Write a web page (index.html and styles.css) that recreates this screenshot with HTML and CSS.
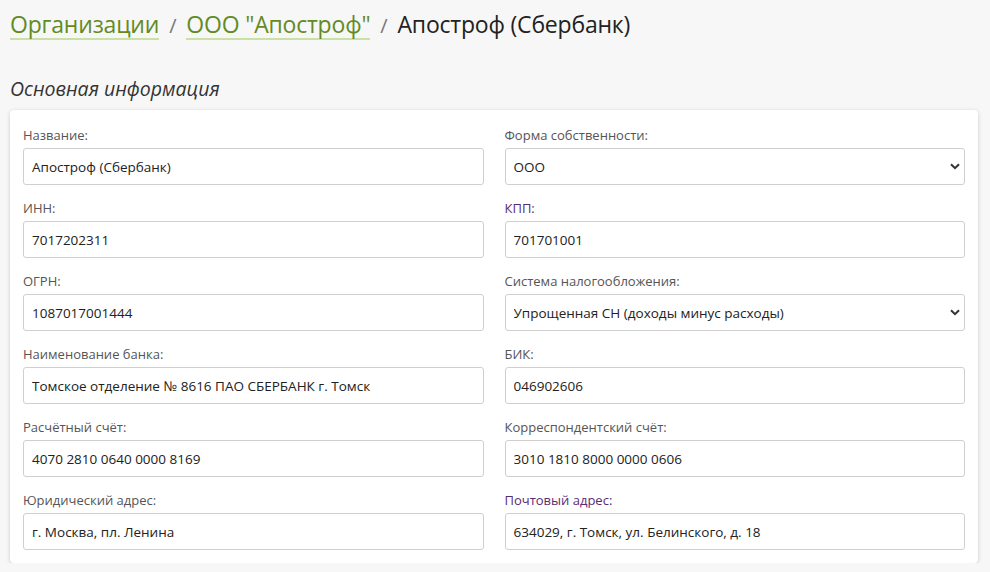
FILE: index.html
```html
<!DOCTYPE html>
<html lang="ru">
<head>
<meta charset="utf-8">
<link rel="stylesheet" href="styles.css">
</head>
<body>
<nav class="crumbs">
  <a class="crumb-link" href="#">Организации</a>
  <span class="sep">/</span>
  <a class="crumb-link" href="#">ООО "Апостроф"</a>
  <span class="sep">/</span>
  <span class="crumb-current">Апостроф (Сбербанк)</span>
</nav>
<h2 class="section-title">Основная информация</h2>
<div class="card">
  <div class="grid">
    <div class="field">
      <label class="label">Название:</label>
      <input class="control" value="Апостроф (Сбербанк)">
    </div>
    <div class="field">
      <label class="label">Форма собственности:</label>
      <div class="select-wrap">
        <select class="control select"><option>ООО</option></select>
        <svg class="chev" width="10" height="7" viewBox="0 0 10 7"><path d="M1 1.2 L5 5.2 L9 1.2" fill="none" stroke="#333" stroke-width="2"/></svg>
      </div>
    </div>
    <div class="field">
      <label class="label">ИНН:</label>
      <input class="control" value="7017202311">
    </div>
    <div class="field">
      <label class="label purple">КПП:</label>
      <input class="control" value="701701001">
    </div>
    <div class="field">
      <label class="label">ОГРН:</label>
      <input class="control" value="1087017001444">
    </div>
    <div class="field">
      <label class="label">Система налогообложения:</label>
      <div class="select-wrap">
        <select class="control select"><option>Упрощенная СН (доходы минус расходы)</option></select>
        <svg class="chev" width="10" height="7" viewBox="0 0 10 7"><path d="M1 1.2 L5 5.2 L9 1.2" fill="none" stroke="#333" stroke-width="2"/></svg>
      </div>
    </div>
    <div class="field">
      <label class="label">Наименование банка:</label>
      <input class="control" value="Томское отделение № 8616 ПАО СБЕРБАНК г. Томск">
    </div>
    <div class="field">
      <label class="label">БИК:</label>
      <input class="control" value="046902606">
    </div>
    <div class="field">
      <label class="label">Расчётный счёт:</label>
      <input class="control" value="4070 2810 0640 0000 8169">
    </div>
    <div class="field">
      <label class="label">Корреспондентский счёт:</label>
      <input class="control" value="3010 1810 8000 0000 0606">
    </div>
    <div class="field">
      <label class="label">Юридический адрес:</label>
      <input class="control" value="г. Москва, пл. Ленина">
    </div>
    <div class="field">
      <label class="label purple">Почтовый адрес:</label>
      <input class="control" value="634029, г. Томск, ул. Белинского, д. 18">
    </div>
  </div>
</div>
</body>
</html>
```
FILE: styles.css
```css
html, body {
  margin: 0;
  padding: 0;
}
body {
  background: #f7f7f7;
  font-family: "Open Sans", "Noto Sans", sans-serif;
  color: #333;
  padding: 0 12px 0 10px;
}
.crumbs {
  box-sizing: border-box;
  display: flex;
  align-items: baseline;
  gap: 10px;
  padding-top: 9px;
  height: 39px;
  font-size: 23px;
  line-height: 30px;
  letter-spacing: -0.2px;
}
.crumb-link {
  color: #648b1f;
  text-decoration: none;
  border-bottom: 2px solid #c9e2a3;
  line-height: 28px;
  display: inline-block;
}
.sep {
  color: #777;
  font-size: 20px;
}
.crumb-current {
  color: #222;
}
.section-title {
  box-sizing: border-box;
  margin: 0;
  padding-top: 37px;
  height: 71px;
  font-size: 19.5px;
  font-weight: 400;
  font-style: italic;
  line-height: 26px;
  color: #333;
}
.card {
  background: #fff;
  border-radius: 4px;
  box-shadow: 0 1px 4px rgba(0,0,0,0.18);
  padding: 16px 13px 13px 13px;
}
.grid {
  display: grid;
  grid-template-columns: 1fr 1fr;
  column-gap: 21px;
  row-gap: 14px;
}
.field {
  display: flex;
  flex-direction: column;
}
.label {
  display: block;
  height: 18px;
  font-size: 13px;
  line-height: 18px;
  color: #555;
  margin-bottom: 4px;
}
.label.purple {
  color: #5a2d72;
}
.control {
  box-sizing: border-box;
  height: 37px;
  width: 100%;
  border: 1px solid #cfcfcf;
  border-radius: 3px;
  padding: 0 8px;
  font-family: "Open Sans", "Noto Sans", sans-serif;
  font-size: 13.5px;
  color: #222;
  background: #fff;
  outline: none;
}
.select-wrap {
  position: relative;
}
.select {
  appearance: none;
  -webkit-appearance: none;
  padding-right: 30px;
}
.chev {
  position: absolute;
  right: 5px;
  top: 15px;
}
```
